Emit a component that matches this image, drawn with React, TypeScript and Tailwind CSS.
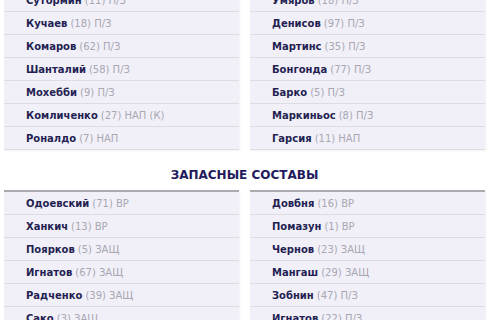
import React from 'react';

type Player = { name: string; info: string };

const startLeft: Player[] = [
  { name: 'Сутормин', info: '(11) П/З' },
  { name: 'Кучаев', info: '(18) П/З' },
  { name: 'Комаров', info: '(62) П/З' },
  { name: 'Шанталий', info: '(58) П/З' },
  { name: 'Мохебби', info: '(9) П/З' },
  { name: 'Комличенко', info: '(27) НАП (К)' },
  { name: 'Роналдо', info: '(7) НАП' },
];

const startRight: Player[] = [
  { name: 'Умяров', info: '(18) П/З' },
  { name: 'Денисов', info: '(97) П/З' },
  { name: 'Мартинс', info: '(35) П/З' },
  { name: 'Бонгонда', info: '(77) П/З' },
  { name: 'Барко', info: '(5) П/З' },
  { name: 'Маркиньос', info: '(8) П/З' },
  { name: 'Гарсия', info: '(11) НАП' },
];

const subsLeft: Player[] = [
  { name: 'Одоевский', info: '(71) ВР' },
  { name: 'Ханкич', info: '(13) ВР' },
  { name: 'Поярков', info: '(5) ЗАЩ' },
  { name: 'Игнатов', info: '(67) ЗАЩ' },
  { name: 'Радченко', info: '(39) ЗАЩ' },
  { name: 'Сако', info: '(3) ЗАЩ' },
];

const subsRight: Player[] = [
  { name: 'Довбня', info: '(16) ВР' },
  { name: 'Помазун', info: '(1) ВР' },
  { name: 'Чернов', info: '(23) ЗАЩ' },
  { name: 'Мангаш', info: '(29) ЗАЩ' },
  { name: 'Зобнин', info: '(47) П/З' },
  { name: 'Игнатов', info: '(22) П/З' },
];

const Column: React.FC<{ players: Player[]; top?: boolean }> = ({ players, top }) => (
  <div
    className={`w-[235px] bg-[#f1f0f8] shadow-[1px_1px_2px_rgba(0,0,0,0.06)] ${
      top ? 'border-t-2 border-[#a9a9b0]' : ''
    }`}
  >
    {players.map((p, i) => (
      <div
        key={i}
        className="flex h-[23px] items-center border-b border-[#dcdce3] pl-[22px] pt-[2px] text-[10px] leading-none"
      >
        <span className="font-bold text-[#241f52]">{p.name}</span>
        <span className="ml-[3px] text-[#a8a7b2]">{p.info}</span>
      </div>
    ))}
  </div>
);

export default function App() {
  return (
    <div
      className="h-[320px] w-[500px] overflow-hidden bg-white"
      style={{ fontFamily: '"DejaVu Sans", sans-serif' }}
    >
      <div className="-mt-[11px] flex gap-[11px] pl-[4px]">
        <Column players={startLeft} />
        <Column players={startRight} />
      </div>
      <div className="flex h-[40px] w-[489px] items-center justify-center pt-[10px]">
        <h2 className="text-[12px] font-bold text-[#231b5d]">ЗАПАСНЫЕ СОСТАВЫ</h2>
      </div>
      <div className="flex gap-[11px] pl-[4px]">
        <Column players={subsLeft} top />
        <Column players={subsRight} top />
      </div>
    </div>
  );
}
